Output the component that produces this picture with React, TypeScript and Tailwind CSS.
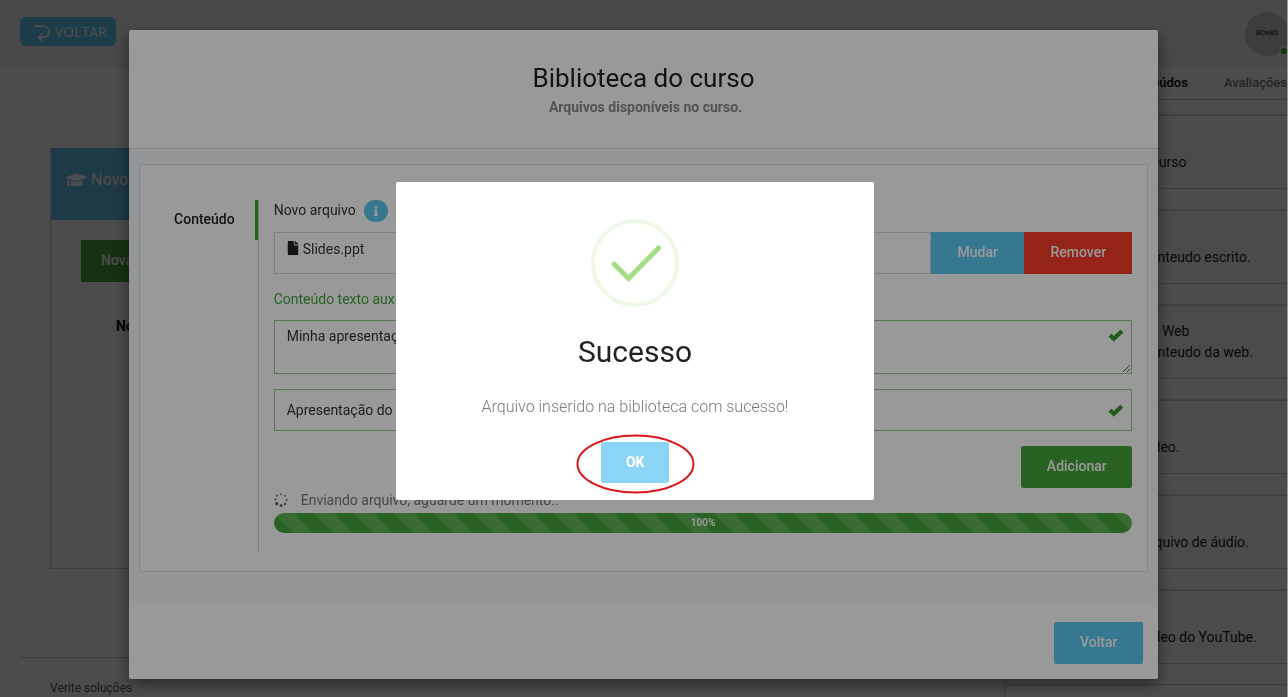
import React from "react";
import { FaFile, FaGraduationCap, FaInfo } from "react-icons/fa";

const contentTypes = [
  { title: "Biblioteca", text: "Conteúdos do curso" },
  { title: "Texto", text: "Adicione um conteudo escrito." },
  { title: "Conteúdos pela Web", text: "Adicione um conteudo da web." },
  { title: "Vídeo", text: "Adicione um vídeo." },
  { title: "Áudio", text: "Adicione um arquivo de áudio." },
  { title: "YouTube", text: "Adicione um vídeo do YouTube." },
];

function ReturnIcon() {
  return (
    <svg viewBox="0 0 18 19" className="h-[19px] w-[18px] translate-y-0.5" fill="none" stroke="currentColor" strokeWidth="1.8" aria-hidden="true">
      <path d="M1 2.200H9.500C14 2.200 16 5 16 8s-2.500 5.400-6 5.400H6" />
      <path d="M9.800 9.400 5.600 13.400 9.800 17.400" />
    </svg>
  );
}

function ValidIcon() {
  return (
    <svg viewBox="0 0 16 14" className="h-3.5 w-4 text-[#3a9a2c]" fill="currentColor" aria-hidden="true">
      <path d="M.8 7.200 3 5a.6.6 0 0 1 .8 0l2 2L12 1a.6.6 0 0 1 .9 0l2 2a.6.6 0 0 1 0 .9L6.300 12.300a.7.7 0 0 1-1 0L.8 8a.6.6 0 0 1 0-.8z" />
    </svg>
  );
}

function Spinner() {
  return (
    <svg viewBox="0 0 14 14" className="size-3.5 text-[#666666]" fill="currentColor" aria-hidden="true">
      <circle cx="7" cy="1.300" r=".9" />
      <circle cx="11" cy="3" r=".9" />
      <circle cx="12.600" cy="7" r="1" />
      <circle cx="11" cy="11" r="1.200" />
      <circle cx="7" cy="12.400" r="1.500" />
      <circle cx="2.800" cy="10.600" r="1.700" />
      <circle cx="1.400" cy="6.500" r="1.100" />
      <circle cx="3" cy="2.800" r="1" />
    </svg>
  );
}

function CoursePage() {
  return (
    <div className="flex h-screen flex-col overflow-hidden border-r border-[#999999] bg-white">
      <header className="flex h-[67px] shrink-0 items-start justify-between bg-[#f3f3f4] pl-5">
        <button className="mt-[17px] flex h-[29px] items-center gap-1 rounded-md bg-[#5bc8f0] pr-[9px] pl-[13px] font-['Open_Sans',sans-serif] text-sm text-white">
          <ReturnIcon />
          VOLTAR
        </button>
        <div className="relative mt-3 -mr-0.5 flex size-11 items-center justify-center rounded-full bg-[#cccccc] pb-0.5 font-['Liberation_Sans',sans-serif] text-[8px] text-black">
          80x80
          <span className="absolute right-0 bottom-0 size-2.5 rounded-full border-2 border-[#f3f3f4] bg-[#3fae2a]" />
        </div>
      </header>
      <div className="flex min-h-0 flex-1">
        <main className="flex min-w-0 flex-1 flex-col justify-between">
          <section className="mx-[50px] mt-[81px] h-[421px] border border-[#d0d0d0]">
            <h2 className="-mt-px -mr-px flex h-[72px] items-center gap-1 bg-[#62c3ea] pb-2 pl-[15px] text-base text-white">
              <FaGraduationCap className="h-5 w-[21px]" />
              Novo módulo
            </h2>
            <button className="mt-5 ml-[30px] h-[42px] bg-[#45a63b] px-5 pb-0.5 text-sm font-medium text-white">Nova aula</button>
            <h3 className="mt-[34px] ml-[65px] text-sm font-bold text-black">Nome do módulo</h3>
          </section>
          <footer className="ml-5 flex h-10 items-center border-t border-[#d0d0d0] pt-5 pl-[30px] text-xs text-[#555555]">Verite soluções</footer>
        </main>
        <aside className="flex w-[283px] shrink-0 flex-col overflow-hidden border-l border-[#d0d0d0]">
          <nav className="flex h-[33px] shrink-0 items-center justify-end gap-9 border-b border-[#d0d0d0] text-[13px] font-medium whitespace-nowrap">
            <a href="#conteudos" className="text-black">Conteúdos</a>
            <a href="#avaliacoes" className="text-[#7d7d7d]">Avaliações</a>
          </nav>
          <ul className="mt-[15px] flex flex-col gap-[21px] text-sm leading-[21px] text-[#222222]">
            {contentTypes.map((item) => (
              <li key={item.title} className="h-[74px] shrink-0 border-y border-[#d0d0d0] bg-[#fafafa] pt-[15px] pl-14 whitespace-nowrap shadow-[0_-1px_0_#dcdcdc]">
                <p>{item.title}</p>
                <p>{item.text}</p>
              </li>
            ))}
          </ul>
          <div className="mt-5 h-px shrink-0 bg-[#d0d0d0]" />
        </aside>
      </div>
    </div>
  );
}

function LibraryModal() {
  return (
    <div role="dialog" aria-labelledby="library-title" className="mx-auto mt-[30px] w-4/5 rounded-xs bg-white shadow-[0_5px_15px_rgba(0,0,0,0.5)]">
      <header className="flex h-[119px] flex-col items-center border-b border-[#dde1e4] pt-8">
        <h1 id="library-title" className="text-[26px] leading-8 font-normal text-[#222222]">Biblioteca do curso</h1>
        <p className="mt-[3px] pl-1 text-sm font-bold text-[#8a8a8a]">Arquivos disponíveis no curso.</p>
      </header>
      <div className="bg-[#f8fafd] px-2.5 pt-[15px] pb-[34px]">
        <div className="flex border border-[#dde1e4] bg-white py-[35px] pr-[15px] pb-5">
          <div className="w-[118px] shrink-0">
            <button className="-mr-px flex h-10 w-full items-center justify-end border-r-3 border-[#3aa52f] pr-5 pb-0.5 text-sm font-medium text-[#222222]">Conteúdo</button>
          </div>
          <div className="flex min-w-0 flex-1 flex-col border-l border-[#cfcfcf] pb-[18px] pl-[15px] text-sm">
            <div className="flex h-[22px] items-center gap-2 text-[#333333]">
              <label htmlFor="file-name" className="pb-0.5">Novo arquivo</label>
              <button aria-label="Ajuda" className="flex h-[22px] w-6 items-center justify-center rounded-full bg-[#5bc8f0] text-white">
                <FaInfo className="size-2.5" />
              </button>
            </div>
            <div className="mt-2.5 flex h-[42px]">
              <div className="flex min-w-0 flex-1 items-start gap-1 border border-[#d5d5d5] px-3 pt-1.5">
                <FaFile className="mt-0.5 h-3.5 w-3 text-[#222222]" />
                <output id="file-name" className="text-[#333333]">Slides.ppt</output>
              </div>
              <button className="w-[93px] bg-[#5bc8f0] pb-0.5 font-medium text-white">Mudar</button>
              <button className="w-[108px] bg-[#f93c28] pb-0.5 font-medium text-white">Remover</button>
            </div>
            <label htmlFor="aux-text" className="mt-[15px] text-[#45a63b]">Conteúdo texto auxiliar</label>
            <div className="relative mt-[11px] flex">
              <textarea id="aux-text" defaultValue="Minha apresentação" className="h-[54px] w-full resize-y border border-[#92c98b] py-[5px] pr-10 pl-3 text-[#333333]" />
              <span className="absolute top-[9px] right-2"><ValidIcon /></span>
            </div>
            <div className="relative mt-[15px] flex">
              <input aria-label="Descrição" defaultValue="Apresentação do curso" className="h-[42px] w-full border border-[#92c98b] pr-10 pl-3 text-[#333333]" />
              <span className="absolute top-[15px] right-2"><ValidIcon /></span>
            </div>
            <button className="mt-[15px] h-[42px] w-[111px] self-end rounded-xs bg-[#45a63b] pb-0.5 font-medium text-white">Adicionar</button>
            <div className="mt-0.5 flex items-center gap-[13px] text-[#777777]">
              <Spinner />
              Enviando arquivo, aguarde um momento..
            </div>
            <div role="progressbar" aria-label="Envio" aria-valuenow={100} className="mt-[3px] flex h-5 items-center justify-center rounded-full bg-[#45a63b] bg-[linear-gradient(45deg,rgba(255,255,255,0.15)_25%,transparent_25%,transparent_50%,rgba(255,255,255,0.15)_50%,rgba(255,255,255,0.15)_75%,transparent_75%)] bg-size-[40px_40px] text-[10px] font-bold text-white">
              100%
            </div>
          </div>
        </div>
      </div>
      <footer className="flex justify-end px-[15px] pt-4 pb-[15px]">
        <button className="h-[42px] w-[89px] rounded-xs bg-[#5bc8f0] pb-0.5 text-sm font-medium text-white">Voltar</button>
      </footer>
    </div>
  );
}

function SuccessAlert() {
  return (
    <div role="alertdialog" aria-labelledby="alert-title" className="fixed top-[182px] left-1/2 -ml-[248px] flex w-[478px] flex-col items-center rounded-xs bg-white px-4 pt-[37px] pb-[17px]">
      <svg viewBox="0 0 88 88" className="size-[88px]" fill="none" aria-hidden="true">
        <circle cx="44" cy="44" r="42" stroke="#edf8e7" strokeWidth="4" />
        <path d="M23 45 37.500 59.500 67.500 29" stroke="#a5dc86" strokeWidth="5" strokeLinecap="round" />
      </svg>
      <h2 id="alert-title" className="mt-[25px] text-[30px] leading-10 font-normal text-[#222222]">Sucesso</h2>
      <p className="mt-[23px] text-base font-light text-[#797979]">Arquivo inserido na biblioteca com sucesso!</p>
      <div className="relative mt-[23px]">
        <button className="h-[41px] w-[68px] rounded-xs bg-[#8cd4f5] pb-0.5 text-sm font-bold text-white">OK</button>
        <svg viewBox="0 0 120 60" className="pointer-events-none absolute -top-2 -left-[26px] h-[60px] w-[120px] max-w-none" fill="none" aria-hidden="true">
          <ellipse cx="60.500" cy="30" rx="58" ry="28.500" stroke="#df1515" strokeWidth="2" />
        </svg>
      </div>
    </div>
  );
}

export default function App() {
  return (
    <div className="font-[Roboto,sans-serif]">
      <CoursePage />
      <div className="fixed inset-0 right-px overflow-hidden bg-black/50">
        <LibraryModal />
      </div>
      <div className="fixed inset-0 right-px bg-black/40" />
      <SuccessAlert />
    </div>
  );
}
